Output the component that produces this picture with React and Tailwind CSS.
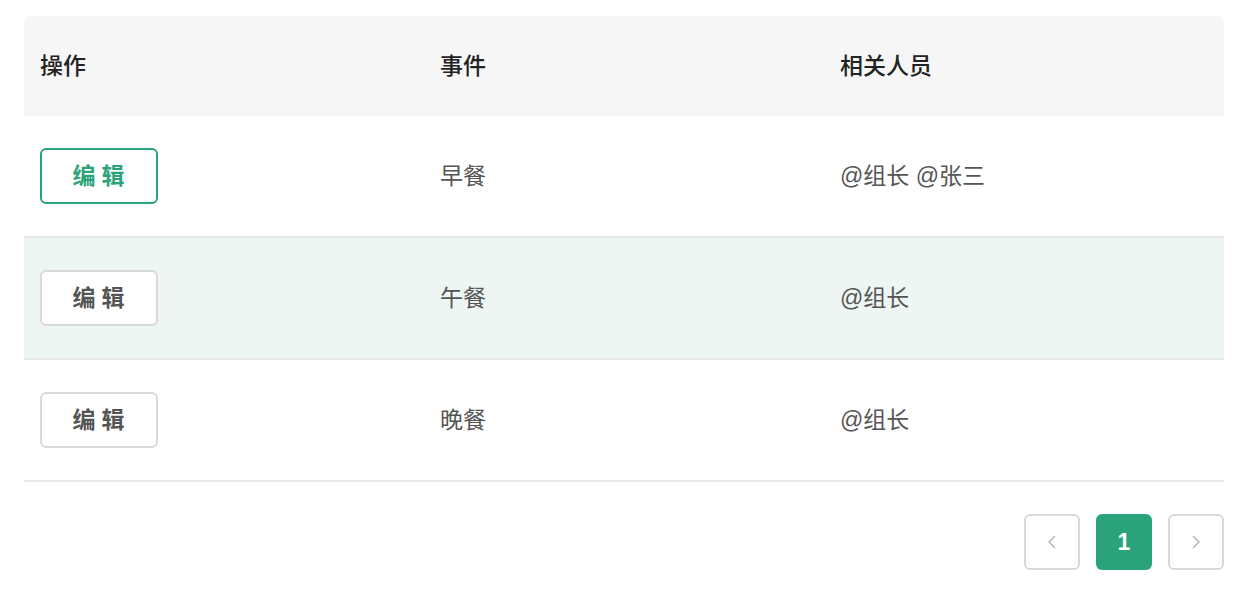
const ROWS = [
  { event: '早餐', people: '@组长 @张三', active: true },
  { event: '午餐', people: '@组长', hover: true },
  { event: '晚餐', people: '@组长' },
];

function EditButton({ active }) {
  return (
    <button
      type="button"
      className={`w-[118px] h-[56px] rounded-[6px] border-2 bg-white text-[23px] font-bold tracking-[0.26em] pl-[5px] ${
        active ? 'border-[#2aa37a] text-[#2aa37a]' : 'border-[#d9d9d9] text-[#555]'
      }`}
    >
      编辑
    </button>
  );
}

function PageArrow({ d }) {
  return (
    <button
      type="button"
      className="w-[56px] h-[56px] rounded-[6px] border-2 border-[#d9d9d9] flex items-center justify-center text-[#b0b0b0]"
    >
      <svg width="12" height="16" viewBox="0 0 12 16" fill="none" stroke="currentColor" strokeWidth="1.4">
        <path d={d} />
      </svg>
    </button>
  );
}

export default function App() {
  return (
    <div
      className="bg-white w-[1244px] h-[590px] pt-[16px] pl-[24px] pr-[20px]"
      style={{ fontFamily: '"Liberation Sans", "Noto Sans CJK SC", sans-serif' }}
    >
      <div className="grid grid-cols-3 h-[100px] bg-[#f6f6f6] rounded-t-[8px] items-center text-[23px] font-medium text-[#222]">
        <div className="pl-[16px]">操作</div>
        <div className="pl-[16px]">事件</div>
        <div className="pl-[16px]">相关人员</div>
      </div>

      {ROWS.map((row) => (
        <div
          key={row.event}
          className={`grid grid-cols-3 h-[122px] items-center border-b-2 border-[#e8e8e8] text-[23px] text-[#555] ${
            row.hover ? 'bg-[#edf6f2]' : 'bg-white'
          }`}
        >
          <div className="pl-[16px]">
            <EditButton active={row.active} />
          </div>
          <div className="pl-[16px]">{row.event}</div>
          <div className="pl-[16px]">{row.people}</div>
        </div>
      ))}

      <div className="flex justify-end gap-[16px] mt-[32px]">
        <PageArrow d="M9 2 3 8l6 6" />
        <button
          type="button"
          className="w-[56px] h-[56px] rounded-[6px] bg-[#2aa37a] text-white text-[23px] font-bold flex items-center justify-center"
        >
          1
        </button>
        <PageArrow d="M3 2l6 6-6 6" />
      </div>
    </div>
  );
}
